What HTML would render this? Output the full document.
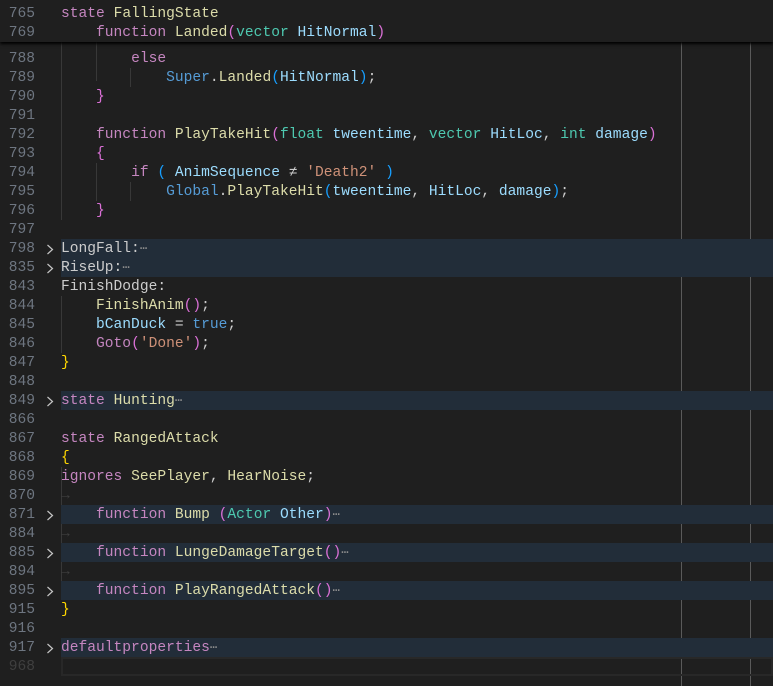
<!DOCTYPE html>
<html><head><meta charset="utf-8"><style>
html,body{margin:0;padding:0;background:#1f1f1f;width:773px;height:686px;overflow:hidden}
body{position:relative;font-family:"Liberation Mono","DejaVu Sans Mono",monospace;font-size:14.6px;color:#cccccc}
.r{position:absolute;left:0;width:773px;height:19px;line-height:19px;margin-top:2px}
.n{position:absolute;left:0;width:35px;text-align:right;color:#6e7681}
.c{position:absolute;left:61px;white-space:pre}
.fb{position:absolute;left:61px;right:0;top:-1px;bottom:1px;background:#222d39}
.ch{position:absolute;left:46px;top:4px;width:8px;height:11px}
.k{color:#c586c0}.y{color:#dcdcaa}.t{color:#4ec9b0}.p{color:#9cdcfe}.s{color:#ce9178}.b{color:#569cd6}
.g1{color:#ffd700}.g2{color:#da70d6}.g3{color:#179fff}
.e{color:#8c8c8c;font-size:12px}
.ws{color:#3f3f3f}
.ig{position:absolute;width:1px;background:#383838}
.ru{position:absolute;top:42px;bottom:0;width:1px;background:#5a5a5a}
.sticky{position:absolute;left:0;top:0;width:773px;height:42px;background:#1f1f1f;box-shadow:0 2px 3px #000;z-index:5}
</style></head><body>
<svg width="0" height="0" style="position:absolute"><defs><symbol id="chev" viewBox="0 0 8 11"><polyline points="1.5,1 6.5,5.5 1.5,10" fill="none" stroke="#c5c5c5" stroke-width="1.2"/></symbol></defs></svg>
<div class="ru" style="left:681px"></div>
<div class="ru" style="left:750px"></div>

<div class="ig" style="left:61px;top:42px;height:178px"></div>
<div class="ig" style="left:96px;top:42px;height:39px"></div>
<div class="ig" style="left:130px;top:68px;height:19px"></div>
<div class="ig" style="left:130px;top:182px;height:19px"></div>
<div class="ig" style="left:96px;top:163px;height:38px"></div>
<div class="ig" style="left:61px;top:296px;height:57px"></div>
<div class="ig" style="left:61px;top:467px;height:133px"></div>

<div class="sticky">
<div class="r" style="top:3px"><span class="n">765</span><span class="c"><span class="k">state</span> <span class="y">FallingState</span></span></div>
<div class="r" style="top:22px"><span class="n">769</span><span class="c">    <span class="k">function</span> <span class="y">Landed</span><span class="g2">(</span><span class="t">vector</span> <span class="p">HitNormal</span><span class="g2">)</span></span></div>
</div>

<div class="r" style="top:48px"><span class="n">788</span><span class="c">        <span class="k">else</span></span></div>
<div class="r" style="top:67px"><span class="n">789</span><span class="c">            <span class="b">Super</span>.<span class="y">Landed</span><span class="g3">(</span><span class="p">HitNormal</span><span class="g3">)</span>;</span></div>
<div class="r" style="top:86px"><span class="n">790</span><span class="c">    <span class="g2">}</span></span></div>
<div class="r" style="top:105px"><span class="n">791</span></div>
<div class="r" style="top:124px"><span class="n">792</span><span class="c">    <span class="k">function</span> <span class="y">PlayTakeHit</span><span class="g2">(</span><span class="t">float</span> <span class="p">tweentime</span>, <span class="t">vector</span> <span class="p">HitLoc</span>, <span class="t">int</span> <span class="p">damage</span><span class="g2">)</span></span></div>
<div class="r" style="top:143px"><span class="n">793</span><span class="c">    <span class="g2">{</span></span></div>
<div class="r" style="top:162px"><span class="n">794</span><span class="c">        <span class="k">if</span> <span class="g3">(</span> <span class="p">AnimSequence</span> ≠ <span class="s">'Death2'</span> <span class="g3">)</span></span></div>
<div class="r" style="top:181px"><span class="n">795</span><span class="c">            <span class="b">Global</span>.<span class="y">PlayTakeHit</span><span class="g3">(</span><span class="p">tweentime</span>, <span class="p">HitLoc</span>, <span class="p">damage</span><span class="g3">)</span>;</span></div>
<div class="r" style="top:200px"><span class="n">796</span><span class="c">    <span class="g2">}</span></span></div>
<div class="r" style="top:219px"><span class="n">797</span></div>
<div class="r" style="top:238px"><div class="fb"></div><span class="n">798</span><svg class="ch"><use href="#chev"/></svg><span class="c">LongFall:<span class="e">⋯</span></span></div>
<div class="r" style="top:257px"><div class="fb"></div><span class="n">835</span><svg class="ch"><use href="#chev"/></svg><span class="c">RiseUp:<span class="e">⋯</span></span></div>
<div class="r" style="top:276px"><span class="n">843</span><span class="c">FinishDodge:</span></div>
<div class="r" style="top:295px"><span class="n">844</span><span class="c">    <span class="y">FinishAnim</span><span class="g2">()</span>;</span></div>
<div class="r" style="top:314px"><span class="n">845</span><span class="c">    <span class="p">bCanDuck</span> = <span class="b">true</span>;</span></div>
<div class="r" style="top:333px"><span class="n">846</span><span class="c">    <span class="k">Goto</span><span class="g2">(</span><span class="s">'Done'</span><span class="g2">)</span>;</span></div>
<div class="r" style="top:352px"><span class="n">847</span><span class="c"><span class="g1">}</span></span></div>
<div class="r" style="top:371px"><span class="n">848</span></div>
<div class="r" style="top:390px"><div class="fb"></div><span class="n">849</span><svg class="ch"><use href="#chev"/></svg><span class="c"><span class="k">state</span> <span class="y">Hunting</span><span class="e">⋯</span></span></div>
<div class="r" style="top:409px"><span class="n">866</span></div>
<div class="r" style="top:428px"><span class="n">867</span><span class="c"><span class="k">state</span> <span class="y">RangedAttack</span></span></div>
<div class="r" style="top:447px"><span class="n">868</span><span class="c"><span class="g1">{</span></span></div>
<div class="r" style="top:466px"><span class="n">869</span><span class="c"><span class="k">ignores</span> <span class="y">SeePlayer</span>, <span class="y">HearNoise</span>;</span></div>
<div class="r" style="top:485px"><span class="n">870</span><span class="c ws">→</span></div>
<div class="r" style="top:504px"><div class="fb"></div><span class="n">871</span><svg class="ch"><use href="#chev"/></svg><span class="c">    <span class="k">function</span> <span class="y">Bump</span> <span class="g2">(</span><span class="t">Actor</span> <span class="p">Other</span><span class="g2">)</span><span class="e">⋯</span></span></div>
<div class="r" style="top:523px"><span class="n">884</span><span class="c ws">→</span></div>
<div class="r" style="top:542px"><div class="fb"></div><span class="n">885</span><svg class="ch"><use href="#chev"/></svg><span class="c">    <span class="k">function</span> <span class="y">LungeDamageTarget</span><span class="g2">()</span><span class="e">⋯</span></span></div>
<div class="r" style="top:561px"><span class="n">894</span><span class="c ws">→</span></div>
<div class="r" style="top:580px"><div class="fb"></div><span class="n">895</span><svg class="ch"><use href="#chev"/></svg><span class="c">    <span class="k">function</span> <span class="y">PlayRangedAttack</span><span class="g2">()</span><span class="e">⋯</span></span></div>
<div class="r" style="top:599px"><span class="n">915</span><span class="c"><span class="g1">}</span></span></div>
<div class="r" style="top:618px"><span class="n">916</span></div>
<div class="r" style="top:637px"><div class="fb"></div><span class="n">917</span><svg class="ch"><use href="#chev"/></svg><span class="c"><span class="k">defaultproperties</span><span class="e">⋯</span></span></div>
<div class="r" style="top:656px"><div style="position:absolute;left:61px;right:0;top:-1px;bottom:1px;border:2px solid #282828;box-sizing:border-box"></div><span class="n" style="color:#3f3f3f">968</span></div>
</body></html>
